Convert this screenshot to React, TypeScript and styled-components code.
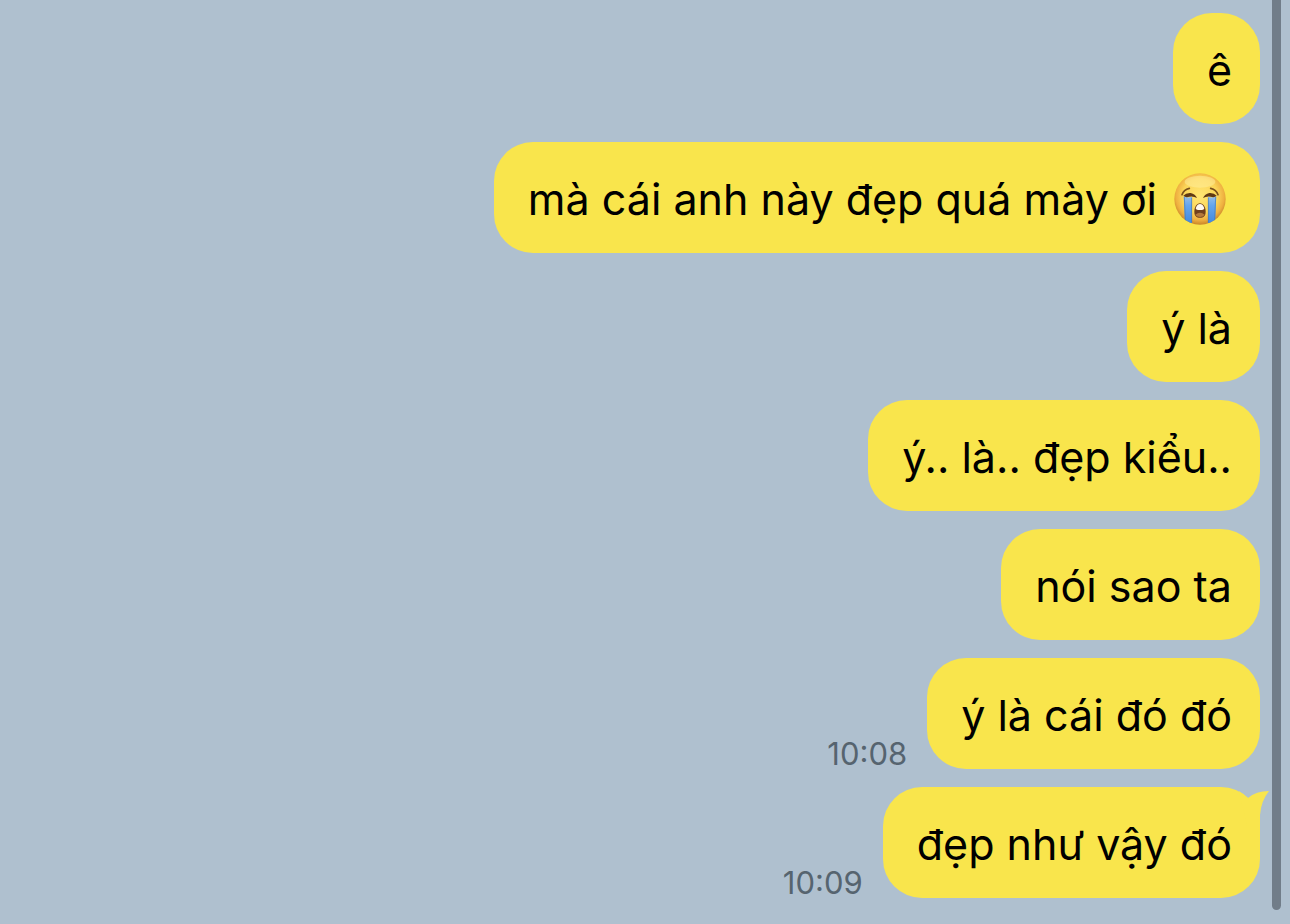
import React from "react";
import styled, { createGlobalStyle } from "styled-components";

const GlobalStyle = createGlobalStyle`
  * {
    box-sizing: border-box;
  }

  body {
    margin: 0;
    background: #afc0cf;
    font-family: Inter, "Noto Sans", sans-serif;
  }
`;

const Screen = styled.div`
  display: flex;
  min-height: 100vh;
  padding-right: 9px;
  background: #afc0cf;
`;

const MessageList = styled.ul`
  flex: 1;
  display: flex;
  flex-direction: column;
  gap: 18px;
  margin: 0;
  padding: 13px 12px 26px 30px;
  list-style: none;
`;

const MessageRow = styled.li`
  display: flex;
  justify-content: flex-end;
  align-items: flex-end;
  gap: 20px;
`;

const Bubble = styled.p`
  position: relative;
  display: flex;
  align-items: center;
  gap: 17px;
  min-height: 111px;
  margin: 0;
  padding: 30px 28px 27px 34px;
  border-radius: 39px;
  background: #f9e54c;
  color: #000;
  font-size: 43px;
  line-height: 54px;
`;

const Time = styled.time`
  color: #56646f;
  font-size: 31px;
  line-height: 31px;
`;

const Tail = styled.svg`
  position: absolute;
  top: 0;
  right: -9px;
  width: 30px;
  height: 39px;
`;

const Emoji = styled.svg`
  flex: none;
  width: 52px;
  height: 52px;
  margin-right: 6px;
`;

const ScrollThumb = styled.div`
  width: 9px;
  margin-bottom: 14px;
  border-radius: 0 0 5px 5px;
  background: #717d89;
`;

function CryingFace() {
  return (
    <Emoji viewBox="0 0 156 156" role="img" aria-label="😭">
      <defs>
        <radialGradient id="face" cx="50%" cy="44%" r="56%">
          <stop offset="0" stopColor="#ffe673" />
          <stop offset="0.6" stopColor="#fbd558" />
          <stop offset="0.84" stopColor="#efb040" />
          <stop offset="1" stopColor="#c98528" />
        </radialGradient>
        <linearGradient id="tear" x1="0" y1="0" x2="0" y2="1">
          <stop offset="0" stopColor="#94bde8" />
          <stop offset="0.35" stopColor="#64a5ed" />
          <stop offset="1" stopColor="#4389dd" />
        </linearGradient>
        <clipPath id="faceClip">
          <circle cx="78" cy="78" r="77" />
        </clipPath>
      </defs>
      <circle cx="78" cy="78" r="77" fill="url(#face)" />
      <ellipse cx="78" cy="26" rx="46" ry="18" fill="#fff0a0" opacity="0.5" />
      <g clipPath="url(#faceClip)">
        <path d="M29 70Q41 76 54 71V150H33Z" fill="url(#tear)" />
        <path d="M102 71Q115 76 127 70L123 150H102Z" fill="url(#tear)" />
        <path d="M31 72L34 142M53 74V149M103 74V149M125 72L122 142" stroke="#4779ae" strokeWidth="2" fill="none" />
      </g>
      <path d="M28 68Q36 59 50 60Q64 63 69 75Q59 69 46 71Q35 75 28 68Z" fill="#603914" />
      <path d="M128 68Q120 59 106 60Q92 63 87 75Q97 69 110 71Q121 75 128 68Z" fill="#603914" />
      <path d="M24 65Q29 50 46 46M132 65Q127 50 110 46" stroke="#79501c" strokeWidth="5" strokeLinecap="round" fill="none" />
      <path d="M78 91C88 91 95 102 95 116C95 128 89 134 78 134C67 134 61 128 61 116C61 102 68 91 78 91Z" fill="#70401d" />
      <path d="M65 106C68 97 72 93 78 93C84 93 88 97 91 106Q90 111 84 111H72Q66 111 65 106Z" fill="#fff9ef" />
      <path d="M64 125Q78 113 92 125Q88 132 78 132Q68 132 64 125Z" fill="#b5793b" />
    </Emoji>
  );
}

type Message = { text: string; crying?: boolean; time?: string; tail?: boolean };

const messages: Message[] = [
  { text: "ê" },
  { text: "mà cái anh này đẹp quá mày ơi", crying: true },
  { text: "ý là" },
  { text: "ý.. là.. đẹp kiểu.." },
  { text: "nói sao ta" },
  { text: "ý là cái đó đó", time: "10:08" },
  { text: "đẹp như vậy đó", time: "10:09", tail: true },
];

export default function App() {
  return (
    <>
      <GlobalStyle />
      <Screen>
        <MessageList>
          {messages.map((message) => (
            <MessageRow key={message.text}>
              {message.time && <Time>{message.time}</Time>}
              <Bubble>
                <span>{message.text}</span>
                {message.crying && <CryingFace />}
                {message.tail && (
                  <Tail viewBox="0 0 30 39" aria-hidden="true">
                    <path d="M0 4L9 11Q17 4 30 4Q22 14 21 28V39H8Z" fill="#f9e54c" />
                  </Tail>
                )}
              </Bubble>
            </MessageRow>
          ))}
        </MessageList>
        <ScrollThumb />
      </Screen>
    </>
  );
}
